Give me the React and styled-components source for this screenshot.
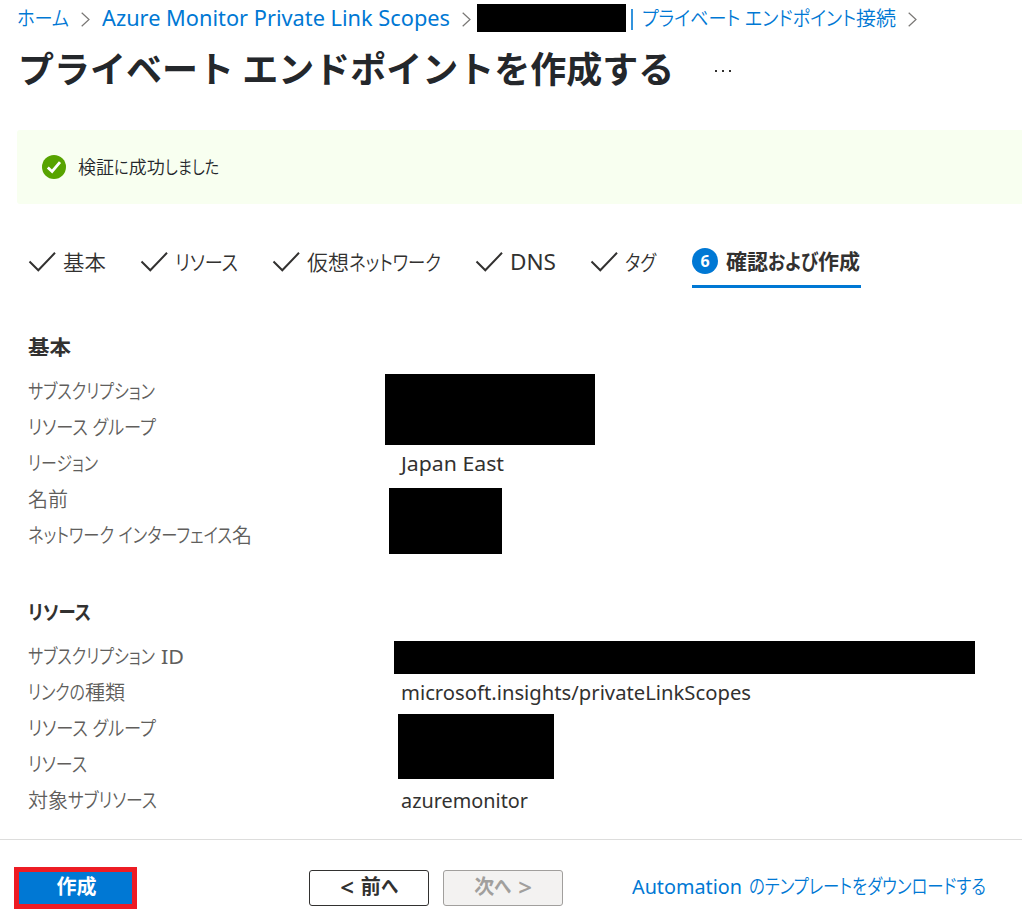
import { useLayoutEffect, useRef } from "react";
import styled, { createGlobalStyle, css } from "styled-components";

const GlobalStyle = createGlobalStyle`
  * {
    box-sizing: border-box;
  }
  body {
    margin: 0;
    background: #fff;
    color: #323130;
    font-family: "Noto Sans", "Noto Sans CJK JP", sans-serif;
    font-size: 20px;
    font-weight: 350;
  }
`;

const Page = styled.div`
  width: 1022px;
  height: 920px;
  overflow: hidden;
  display: flex;
  flex-direction: column;
`;

const TextBox = styled.span`
  display: inline-block;
  flex: none;
  white-space: pre;
  width: ${(p) => p.$width}px;
  font-size: ${(p) => p.$size || 20}px;
  font-feature-settings: "palt";
  ${(p) => p.$latin && "font-weight: 400;"}
`;

const Run = styled.span`
  display: inline-block;
  transform-origin: 0 50%;
`;

const KANA = /[\u3040-\u30ff ]+|[^\u3040-\u30ff ]+/g;
const IS_KANA = /^[\u3040-\u30ff ]/;
const IS_LATIN = /^[\x20-\x7e]+$/;

// UI text with narrow kana: kanji keep their width, kana take what is left
const UiText = ({ width, size, children }) => {
  const box = useRef(null);
  const hasKana = /[\u3040-\u30ff]/.test(children);
  const runs = hasKana ? children.match(KANA) : [children];

  useLayoutEffect(() => {
    let fixed = 0;
    let flexible = 0;
    const spans = [...box.current.children];
    const sizes = spans.map((s) => parseFloat(getComputedStyle(s).width));
    spans.forEach((s, i) => {
      if (!hasKana || IS_KANA.test(runs[i])) flexible += sizes[i];
      else fixed += sizes[i];
    });
    const k = (width - fixed) / flexible;
    spans.forEach((s, i) => {
      if (hasKana && !IS_KANA.test(runs[i])) return;
      s.style.transform = `scaleX(${k})`;
      s.style.marginRight = `${sizes[i] * (k - 1)}px`;
    });
  });

  return (
    <TextBox ref={box} $width={width} $size={size} $latin={IS_LATIN.test(children)}>
      {runs.map((r, i) => (
        <Run key={i}>{r}</Run>
      ))}
    </TextBox>
  );
};

const Breadcrumb = styled.nav`
  display: flex;
  align-items: center;
  height: 36px;
  padding-left: 17px;
  color: #0078d4;
  line-height: 37px;
`;

const Chevron = styled.svg`
  flex: none;
  width: 9px;
  height: 15px;
  margin: 3px ${(p) => p.$right}px 0 ${(p) => p.$left}px;
  fill: none;
  stroke: #797775;
  stroke-width: 1.2;
`;

const CrumbMask = styled.span`
  width: 149px;
  height: 28px;
  background: #000;
`;

const Pipe = styled.span`
  width: 2px;
  height: 21px;
  margin: 3px 9px 0 5px;
  background: #3393dd;
`;

const TitleRow = styled.header`
  display: flex;
  align-items: center;
  height: 66px;
  padding-left: 18px;
`;

const Title = styled.h1`
  margin: 0;
  width: 696px;
  height: 66px;
  color: #24272b;
  font-family: "Noto Sans CJK JP", sans-serif;
  font-size: 36px;
  font-weight: 700;
  line-height: 62px;
  white-space: nowrap;
`;

const More = styled.svg`
  width: 18px;
  height: 4px;
  margin-top: 4px;
  fill: #323130;
`;

const Banner = styled.div`
  display: flex;
  align-items: center;
  gap: 12px;
  height: 74px;
  margin: 28px 0 0 17px;
  padding-left: 25px;
  border-radius: 3px 0 0 3px;
  background: #f8fff0;
  color: #24272b;
  line-height: 24px;
`;

const Tabs = styled.div`
  display: flex;
  gap: 34px;
  height: 52px;
  margin-top: 32px;
  padding-left: 28px;
`;

const Tab = styled.div`
  display: flex;
  align-items: center;
  gap: 7px;
  height: 52px;
  line-height: 51px;
  ${(p) =>
    p.$active &&
    css`
      margin-left: 2px;
      padding-right: 1px;
      border-bottom: 3px solid #0078d4;
      font-weight: 700;
      line-height: 51px;

      ${TextBox} {
        padding-top: 2px;
      }
    `}
`;

const Tick = styled.svg`
  width: 28px;
  height: 22px;
  fill: none;
  stroke: #323130;
  stroke-width: 2;
`;

const StepNumber = styled.span`
  width: 26px;
  height: 26px;
  margin-right: 1px;
  border-radius: 50%;
  background: #0078d4;
  color: #fff;
  font-size: 16px;
  line-height: 26px;
  text-align: center;
`;

const Section = styled.section`
  padding-left: 28px;
  margin-top: ${(p) => p.$top}px;
`;

const Heading = styled.h2`
  margin: 0 0 11px;
  height: 30px;
  font-size: 20px;
  font-weight: 700;
  line-height: 32px;
`;

const Rows = styled.div`
  position: relative;
`;

const Row = styled.div`
  display: flex;
  height: 36px;
  color: #605e5c;
  line-height: 38px;
`;

const Name = styled.div`
  display: flex;
  gap: 6px;
  width: 373px;
`;

const Value = styled.div`
  color: #323130;
`;

/* covers private values on top of the rows */
const Mask = styled.div`
  position: absolute;
  left: ${(p) => p.$x}px;
  top: ${(p) => p.$y}px;
  width: ${(p) => p.$w}px;
  height: ${(p) => p.$h}px;
  background: #000;
`;

const Footer = styled.footer`
  display: flex;
  align-items: center;
  height: 81px;
  margin-top: 21px;
  padding: 16px 0 1px 14px;
  border-top: 1px solid #dddddc;
`;

const Button = styled.button`
  display: flex;
  align-items: center;
  justify-content: center;
  gap: 7px;
  width: 120px;
  height: 36px;
  margin: 0 14px 0 0;
  padding: 0 0 1px;
  border: 1px solid #323130;
  border-radius: 3px;
  background: #fff;
  color: #323130;
  font-family: inherit;
  font-size: 19px;
  font-weight: 700;
  line-height: 30px;

  &:disabled {
    border-color: #a19f9d;
    background: #f3f2f1;
    color: #a19f9d;
  }
`;

const PrimaryButton = styled(Button)`
  width: 123px;
  height: 42px;
  margin-right: 172px;
  padding: 0 0 1px 2px;
  border: 5px solid #ed1c24;
  border-radius: 0;
  background: #0078d4;
  color: #fff;
`;

const Arrow = styled.span`
  font-size: 24px;
  font-weight: 600;
`;

const DownloadLink = styled.a`
  display: flex;
  gap: 7px;
  margin: -1px 0 0 55px;
  color: #0078d4;
  line-height: 36px;
`;

const CrumbChevron = ({ left, right }) => (
  <Chevron viewBox="0 0 9 15" $left={left} $right={right}>
    <path d="M.7 .7 8 7.5 .7 14.3" />
  </Chevron>
);

const doneTabs = [
  { text: "基本", width: 43 },
  { text: "リソース", width: 63 },
  { text: "仮想ネットワーク", width: 134 },
  { text: "DNS", width: 46 },
  { text: "タグ", width: 31 },
];

const sections = [
  {
    title: "基本",
    titleWidth: 43,
    top: 44,
    rows: [
      { name: "サブスクリプション", width: 127 },
      { name: "リソース グループ", width: 128 },
      { name: "リージョン", width: 70, value: "Japan East", valueWidth: 103 },
      { name: "名前", width: 40 },
      { name: "ネットワーク インターフェイス名", width: 224 },
    ],
    masks: [
      [357, 1, 210, 71],
      [361, 115, 113, 66],
    ],
  },
  {
    title: "リソース",
    titleWidth: 63,
    top: 44,
    rows: [
      { name: "サブスクリプション", width: 127, latin: "ID", latinWidth: 23 },
      {
        name: "リンクの種類",
        width: 97,
        value: "microsoft.insights/privateLinkScopes",
        valueWidth: 350,
      },
      { name: "リソース グループ", width: 128 },
      { name: "リソース", width: 59 },
      { name: "対象サブリソース", width: 129, value: "azuremonitor", valueWidth: 127 },
    ],
    masks: [
      [366, 3, 581, 33],
      [370, 76, 156, 65],
    ],
  },
];

const App = () => (
  <Page>
    <GlobalStyle />
    <Breadcrumb>
      <UiText width={52}>ホーム</UiText>
      <CrumbChevron left={12} right={12} />
      <UiText width={348} size={21}>
        Azure Monitor Private Link Scopes
      </UiText>
      <CrumbChevron left={12} right={6} />
      <CrumbMask />
      <Pipe />
      <UiText width={254}>プライベート エンドポイント接続</UiText>
      <CrumbChevron left={12} right={0} />
    </Breadcrumb>

    <TitleRow>
      <Title>プライベート エンドポイントを作成する</Title>
      <More viewBox="0 0 18 4">
        <rect x="1" y="1" width="2" height="2" />
        <rect x="8" y="1" width="2" height="2" />
        <rect x="15" y="1" width="2" height="2" />
      </More>
    </TitleRow>

    <Banner>
      <svg width="24" height="24" viewBox="0 0 24 24">
        <circle cx="12" cy="12" r="12" fill="#57a300" />
        <path d="M5.8 12.5 10.1 16.5 18 7.2" fill="none" stroke="#fff" strokeWidth="2.8" />
      </svg>
      <UiText width={141} size={18}>
        検証に成功しました
      </UiText>
    </Banner>

    <Tabs>
      {doneTabs.map((t) => (
        <Tab key={t.text}>
          <Tick viewBox="0 0 28 22">
            <path d="M1.5 10.5 10.3 19.3 27 1.8" />
          </Tick>
          <UiText width={t.width} size={21}>
            {t.text}
          </UiText>
        </Tab>
      ))}
      <Tab $active>
        <StepNumber>6</StepNumber>
        <UiText width={134} size={21}>
          確認および作成
        </UiText>
      </Tab>
    </Tabs>

    {sections.map((s) => (
      <Section key={s.title} $top={s.top}>
        <Heading>
          <UiText width={s.titleWidth}>{s.title}</UiText>
        </Heading>
        <Rows>
          {s.rows.map((r) => (
            <Row key={r.name}>
              <Name>
                <UiText width={r.width}>{r.name}</UiText>
                {r.latin && <UiText width={r.latinWidth}>{r.latin}</UiText>}
              </Name>
              {r.value && (
                <Value>
                  <UiText width={r.valueWidth}>{r.value}</UiText>
                </Value>
              )}
            </Row>
          ))}
          {s.masks.map(([x, y, w, h]) => (
            <Mask key={y} $x={x} $y={y} $w={w} $h={h} />
          ))}
        </Rows>
      </Section>
    ))}

    <Footer>
      <PrimaryButton>
        <UiText width={40}>作成</UiText>
      </PrimaryButton>
      <Button>
        <Arrow>&lt;</Arrow>
        <UiText width={37}>前へ</UiText>
      </Button>
      <Button disabled>
        <UiText width={37}>次へ</UiText>
        <Arrow>&gt;</Arrow>
      </Button>
      <DownloadLink>
        <UiText width={110}>Automation</UiText>
        <UiText width={237}>のテンプレートをダウンロードする</UiText>
      </DownloadLink>
    </Footer>
  </Page>
);

export default App;
